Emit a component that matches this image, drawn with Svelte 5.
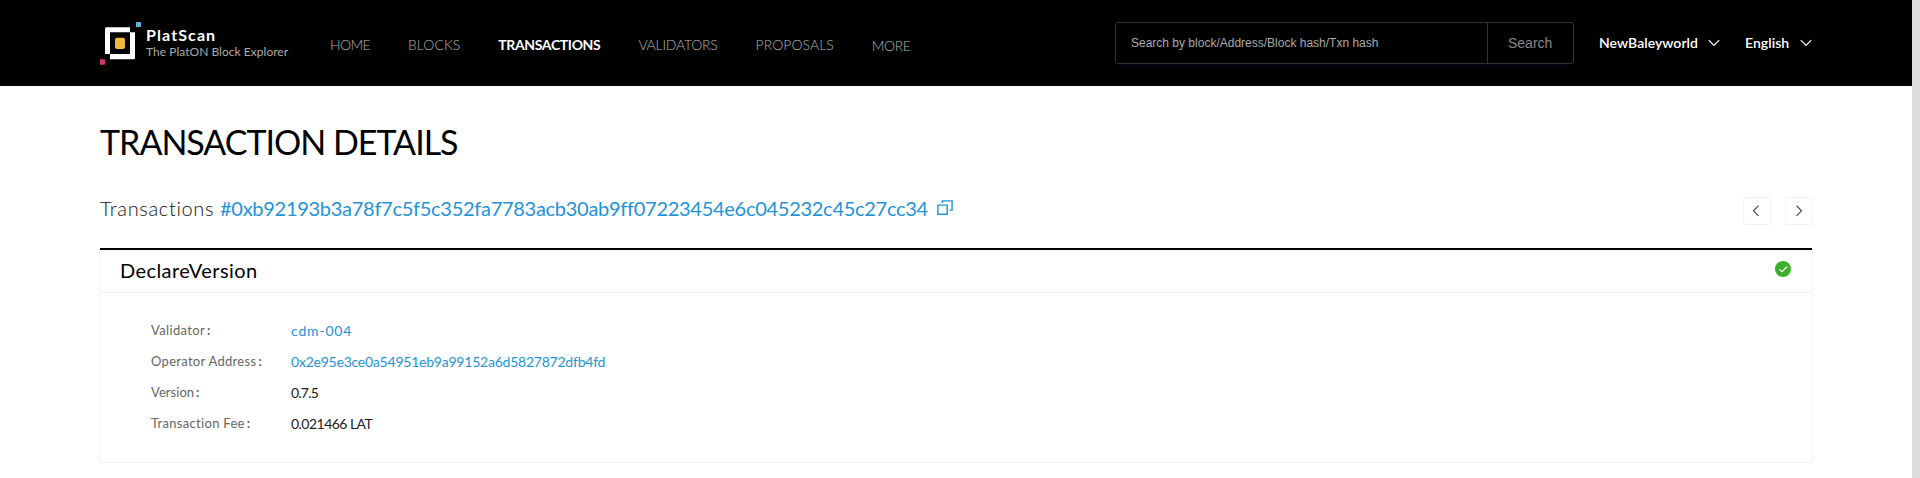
<script>
  const nav = [
    { label: 'HOME', spacing: -0.62 },
    { label: 'BLOCKS', spacing: 0 },
    { label: 'TRANSACTIONS', spacing: -0.36, active: true },
    { label: 'VALIDATORS', spacing: -0.24 },
    { label: 'PROPOSALS', spacing: 0.04 },
    { label: 'MORE', spacing: -0.45, low: true }
  ];
  const rows = [
    { label: 'Validator', labelSpacing: 0.35, value: 'cdm-004', spacing: 0.82, link: true },
    { label: 'Operator Address', labelSpacing: 0.3, value: '0x2e95e3ce0a54951eb9a99152a6d5827872dfb4fd', spacing: -0.23, link: true },
    { label: 'Version', labelSpacing: 0.05, value: '0.7.5', spacing: -0.8 },
    { label: 'Transaction Fee', labelSpacing: 0.31, value: '0.021466 LAT', spacing: -0.53 }
  ];
</script>

{#snippet chevron()}
  <svg class="chevron" width="12" height="8" viewBox="0 0 12 8"><path d="M.8 1.2 6 6.4l5.2-5.2" fill="none" stroke="#fff" stroke-width="1.2" /></svg>
{/snippet}

<div class="page">
  <div class="main">
    <header>
      <a class="logo" href="#home">
        <svg width="41" height="43" viewBox="0 0 41 43">
          <path d="M6.5 5.3H30v5H10V32H5V6.8q0-1.5 1.5-1.5z" fill="#fff" />
          <path d="M30 10.3h5v25.5q0 1.5-1.5 1.5H10V32h20z" fill="#fff" />
          <rect x="15" y="15.7" width="10" height="11.3" rx="2" fill="#edb83d" />
          <rect x="36" y="0" width="5" height="5" rx=".5" fill="#5eb1dc" />
          <rect x="0" y="37.2" width="5" height="5.5" rx=".5" fill="#d2366f" />
        </svg>
        <span class="brand">
          <strong>PlatScan</strong>
          <small>The PlatON Block Explorer</small>
        </span>
      </a>
      <nav>
        {#each nav as item}
          <a href="#nav" class:active={item.active} class:low={item.low} style:letter-spacing="{item.spacing}px">{item.label}</a>
        {/each}
      </nav>
      <div class="search">
        <span class="field">Search by block/Address/Block hash/Txn hash</span>
        <span class="go">Search</span>
      </div>
      <div class="select network"><span>NewBaleyworld</span>{@render chevron()}</div>
      <div class="select language"><span>English</span>{@render chevron()}</div>
    </header>

    <div class="content">
      <h1>TRANSACTION DETAILS</h1>
      <div class="summary">
        <span class="kind">Transactions</span>
        <span class="hash">#0xb92193b3a78f7c5f5c352fa7783acb30ab9ff07223454e6c045232c45c27cc34</span>
        <svg class="copy" width="17" height="16" viewBox="0 0 17 16" fill="none" stroke="#1e93d9" stroke-width="1.4"><path d="M.9 5.1h9.3v9.2H.9z" /><path d="M5.3 2.9V.9h9.8v9.2h-2.6" /></svg>
        <div class="pager">
          <button aria-label="Previous"><svg width="28" height="28" viewBox="0 0 28 28"><path d="m15.5 8.7-5 5.1 5 5.1" /></svg></button>
          <button aria-label="Next"><svg width="28" height="28" viewBox="0 0 28 28"><path d="m11.5 8.7 5 5.1-5 5.1" /></svg></button>
        </div>
      </div>
      <section>
        <div class="title">
          <h2>DeclareVersion</h2>
          <svg width="16" height="16" viewBox="0 0 16 16"><circle cx="8" cy="8" r="8" fill="#3db02b" /><path d="m4.2 8.1 2.7 2.6 5.4-5.2" fill="none" stroke="#fff" stroke-width="1.2" /></svg>
        </div>
        <dl>
          {#each rows as row}
            <div class="row">
              <dt><span style:letter-spacing="{row.labelSpacing}px">{row.label}</span><i>:</i></dt>
              <dd class:link={row.link} style:letter-spacing="{row.spacing}px">{row.value}</dd>
            </div>
          {/each}
        </dl>
      </section>
    </div>
  </div>
  <div class="scrollbar"></div>
</div>

<style>
  :global(body) { margin: 0; background: #fff; overflow: hidden; }
  .page { display: flex; height: 478px; font-family: Lato, sans-serif; white-space: nowrap; color: #000; }
  .page * { box-sizing: border-box; }
  .main { width: 1912px; }
  .scrollbar { width: 8px; background: #dcdcdc; }
  a { color: inherit; text-decoration: none; }
  header { display: flex; height: 86px; background: #000; padding-left: 100px; }
  .logo { display: flex; width: 230px; padding-top: 22px; }
  .logo svg { flex: none; }
  .brand { display: flex; flex-direction: column; padding: 3px 0 0 5px; }
  strong { height: 20px; line-height: 20px; font-size: 16px; letter-spacing: 1.1px; color: #fff; }
  small { height: 12px; line-height: 13px; font-size: 12px; letter-spacing: .03px; color: #aaa; }
  nav { display: flex; gap: 38px; width: 785px; padding-top: 3px; font-size: 14px; line-height: 84px; font-weight: 300; color: #b4b4b4; }
  .active { color: #fff; font-weight: 700; }
  .low { padding-top: 1px; }
  .search { display: flex; width: 459px; height: 42px; margin-top: 22px; border: 1px solid #333; border-radius: 3px; box-shadow: 0 3px 5px #03030f; font-family: "Liberation Sans", sans-serif; }
  .field { width: 372px; padding-left: 15px; border-right: 1px solid #333; font-size: 12px; line-height: 41px; color: #aaa; }
  .go { padding-left: 20px; font-size: 14px; line-height: 41px; color: #888; }
  .select { display: flex; color: #fff; font-size: 14px; line-height: 85px; font-weight: 600; letter-spacing: .05px; }
  .network { margin-left: 25px; }
  .network span { width: 101px; }
  .language { margin-left: 25px; }
  .language span { width: 47px; }
  .chevron { margin: 39px 0 0 8px; flex: none; }
  .content { width: 1714px; margin-left: 99px; }
  h1 { margin: 0; padding: 33px 0 0 1px; height: 98px; font-size: 34px; line-height: 46px; font-weight: 400; letter-spacing: -1px; }
  .summary { display: flex; height: 64px; padding-left: 1px; line-height: 49px; font-size: 20px; }
  .kind { width: 120px; color: #111; letter-spacing: .66px; font-weight: 300; }
  .hash { width: 717px; color: #1e93d9; letter-spacing: -.28px; }
  .copy { margin-top: 16px; flex: none; }
  .pager { display: flex; gap: 14px; margin-left: auto; padding-top: 13px; }
  button { width: 28px; height: 28px; padding: 0; border: 1px solid #f2f2f2; border-radius: 3px; background: #fff; }
  button svg { display: block; margin: -1px; fill: none; stroke: #3f4a61; stroke-width: 1.2; }
  section { height: 215px; border: 1px solid #f2f2f2; border-top: 0; }
  .title { display: flex; height: 45px; padding: 0 21px 0 20px; border-top: 2px solid #000; border-bottom: 1px solid #f2f2f2; }
  h2 { flex: 1; margin: 0; font-size: 20px; line-height: 41px; font-weight: 400; letter-spacing: .43px; }
  .title svg { margin: 11px 0 0; }
  dl { margin: 0; padding: 22px 0 0 51px; }
  .row { display: flex; height: 31px; line-height: 31px; }
  dt { display: flex; width: 140px; font-size: 13px; color: #666; }
  i { font-style: normal; padding-left: 2px; font-weight: 700; }
  dd { margin: 0; font-size: 14px; color: #222; }
  .link { color: #1e93d9; }
</style>
